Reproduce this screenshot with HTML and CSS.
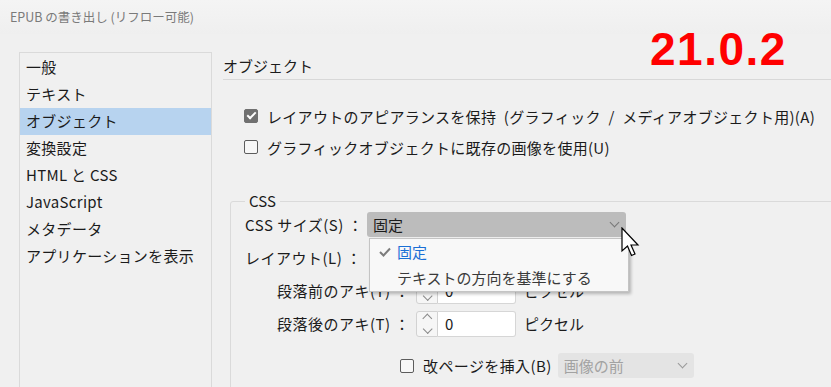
FILE: index.html
```html
<!DOCTYPE html>
<html lang="ja">
<head>
    <meta charset="UTF-8">
    <meta name="viewport" content="width=device-width, initial-scale=1.0">
    <title>EPUB の書き出し (リフロー可能)</title>
    <link rel="stylesheet" href="styles.css">
</head>
<body>

    <div class="titlebar">EPUB の書き出し (リフロー可能)</div>
    <div class="version">21.0.2</div>

    <div class="main">
        <ul class="nav">
            <li>一般</li>
            <li>テキスト</li>
            <li class="selected">オブジェクト</li>
            <li>変換設定</li>
            <li>HTML と CSS</li>
            <li>JavaScript</li>
            <li>メタデータ</li>
            <li>アプリケーションを表示</li>
        </ul>

        <div class="content">
            <div class="heading">オブジェクト</div>

            <label class="check-row first">
                <span class="box checked"></span>
                レイアウトのアピアランスを保持 (グラフィック / メディアオブジェクト用)(A)
            </label>
            <label class="check-row">
                <span class="box"></span>
                グラフィックオブジェクトに既存の画像を使用(U)
            </label>

            <fieldset class="group">
                <legend>CSS</legend>

                <div class="row">
                    <span class="label wide">CSS サイズ(S) ：</span>
                    <div class="select active">
                        <span>固定</span>
                        <span class="chev"></span>
                    </div>
                </div>
                <div class="row">
                    <span class="label wide">レイアウト(L) ：</span>
                </div>
                <div class="row">
                    <span class="label narrow">段落前のアキ(T) ：</span>
                    <span class="spin"><span class="up"></span><span class="down"></span></span>
                    <span class="num">0</span>
                    <span class="unit">ピクセル</span>
                </div>
                <div class="row">
                    <span class="label narrow">段落後のアキ(T) ：</span>
                    <span class="spin"><span class="up"></span><span class="down"></span></span>
                    <span class="num">0</span>
                    <span class="unit">ピクセル</span>
                </div>
                <div class="row pagebreak">
                    <label class="inline-check"><span class="box"></span>改ページを挿入(B)</label>
                    <div class="select disabled">
                        <span>画像の前</span>
                        <span class="chev"></span>
                    </div>
                </div>
            </fieldset>
        </div>
    </div>

    <ul class="menu">
        <li class="current">
            <svg class="tick" width="12" height="10" viewBox="0 0 12 10"><polyline points="1,5 4.5,8.5 11,1.5" fill="none" stroke="#7c7c7c" stroke-width="2"/></svg>
            固定
        </li>
        <li>テキストの方向を基準にする</li>
    </ul>

    <svg class="cursor" width="22" height="32" viewBox="0 0 22 32">
        <path d="M1 1 L1 24 L6.5 19 L10.5 28.5 L14 27 L10 18 L17 18 Z" fill="#fff" stroke="#000" stroke-width="1.2" stroke-linejoin="miter"/>
    </svg>

</body>
</html>
```

FILE: styles.css
```css
body {
    margin: 0;
    width: 831px;
    height: 387px;
    overflow: hidden;
    background: #f0f0f0;
    font-family: "Noto Sans CJK JP", "Noto Sans", sans-serif;
    font-size: 15px;
    color: #1b1b1b;
    position: relative;
}
.titlebar {
    height: 34px;
    line-height: 34px;
    padding-left: 10px;
    font-size: 12.5px;
    color: #7a7a7a;
    background: linear-gradient(#f4f4f4, #efefef);
}
.version {
    position: absolute;
    left: 650px;
    top: 23px;
    font-family: "Liberation Sans", Arial, sans-serif;
    font-weight: bold;
    font-size: 46px;
    letter-spacing: 1.5px;
    line-height: 52px;
    color: #ff0000;
}
.main {
    display: flex;
    margin-top: 18px;
    padding-left: 19px;
}
.nav {
    list-style: none;
    margin: 0;
    padding: 0 0 1px;
    width: 191px;
    height: 340px;
    border: 1px solid #dadada;
    border-bottom: none;
}
.nav li {
    height: 27px;
    line-height: 26px;
    padding-left: 6px;
    letter-spacing: 0.3px;
}
.nav li:first-child {
    margin-top: 1px;
}
.nav li.selected {
    background: #b7d3ef;
}
.content {
    flex: 1;
    margin-left: 11px;
}
.heading {
    margin-top: 1px;
    height: 26px;
    line-height: 25px;
    border-bottom: 1px solid #d8d8d8;
}
.check-row {
    display: flex;
    align-items: center;
    height: 24px;
    margin-top: 7px;
    padding-left: 21px;
    letter-spacing: 0.3px;
}
.check-row.first {
    margin-top: 24px;
    word-spacing: 4px;
}
.box {
    width: 12px;
    height: 12px;
    border: 1px solid #5c5c5c;
    border-radius: 2px;
    background: #f7f7f7;
    margin-right: 9px;
    flex-shrink: 0;
    position: relative;
}
.box.checked {
    background: #707070;
    border-color: #707070;
}
.box.checked::after {
    content: "";
    position: absolute;
    left: 2px;
    top: 2px;
    width: 7px;
    height: 3px;
    border-left: 2px solid #fff;
    border-bottom: 2px solid #fff;
    transform: rotate(-45deg);
}
.group {
    margin: 35px -10px 0 7px;
    padding: 0 0 20px 14px;
    border: 1px solid #dadada;
    border-radius: 3px;
}
.group legend {
    padding: 0 4px;
    line-height: 14px;
}
.row {
    display: flex;
    align-items: center;
    height: 25px;
    margin-top: 8px;
}
.row:first-of-type {
    margin-top: 4px;
}
.label {
    text-align: right;
    flex-shrink: 0;
    letter-spacing: 0.5px;
    white-space: nowrap;
}
.label.wide {
    width: 116px;
    margin-right: 6px;
}
.label.narrow {
    width: 165px;
    margin-right: 6px;
}
.select {
    display: flex;
    align-items: center;
    justify-content: space-between;
    height: 25px;
    padding: 0 8px 0 6px;
    border-radius: 3px;
    box-sizing: border-box;
}
.select.active {
    width: 259px;
    background: #bcbcbc;
}
.select.disabled {
    width: 136px;
    background: #e4e4e4;
    color: #a2a2a2;
}
.chev {
    width: 6px;
    height: 6px;
    border-right: 1px solid #777;
    border-bottom: 1px solid #777;
    transform: rotate(45deg);
    margin-top: -5px;
}
.select.disabled .chev {
    border-color: #9a9a9a;
}
.spin {
    width: 20px;
    height: 24px;
    border: 1px solid #d2d2d2;
    border-radius: 3px 0 0 3px;
    background: #f6f6f6;
    display: flex;
    flex-direction: column;
    align-items: center;
    justify-content: center;
    gap: 5px;
}
.spin span {
    width: 6px;
    height: 6px;
    border-left: 1px solid #8a8a8a;
    border-top: 1px solid #8a8a8a;
}
.spin .up {
    transform: rotate(45deg);
    margin-top: 3px;
}
.spin .down {
    transform: rotate(225deg);
    margin-bottom: 3px;
}
.num {
    width: 70px;
    height: 24px;
    line-height: 24px;
    padding-left: 7px;
    border: 1px solid #d6d6d6;
    border-left: none;
    border-radius: 0 3px 3px 0;
    background: #fff;
}
.unit {
    margin-left: 8px;
}
.row.pagebreak {
    margin-top: 17px;
    padding-left: 155px;
}
.inline-check {
    display: flex;
    align-items: center;
    margin-right: 6px;
    letter-spacing: 0.4px;
}
.menu {
    position: absolute;
    left: 369px;
    top: 238px;
    width: 258px;
    margin: 0;
    padding: 0;
    list-style: none;
    background: #f8f8f8;
    border: 1px solid #c4c4c4;
    box-shadow: 2px 2px 3px rgba(0, 0, 0, 0.25);
}
.menu li {
    height: 26px;
    line-height: 26px;
    padding-left: 27px;
    color: #3a3a3a;
    position: relative;
}
.menu li.current {
    color: #1a6fd6;
}
.tick {
    position: absolute;
    left: 9px;
    top: 8px;
}
.cursor {
    position: absolute;
    left: 621px;
    top: 227px;
}
```
